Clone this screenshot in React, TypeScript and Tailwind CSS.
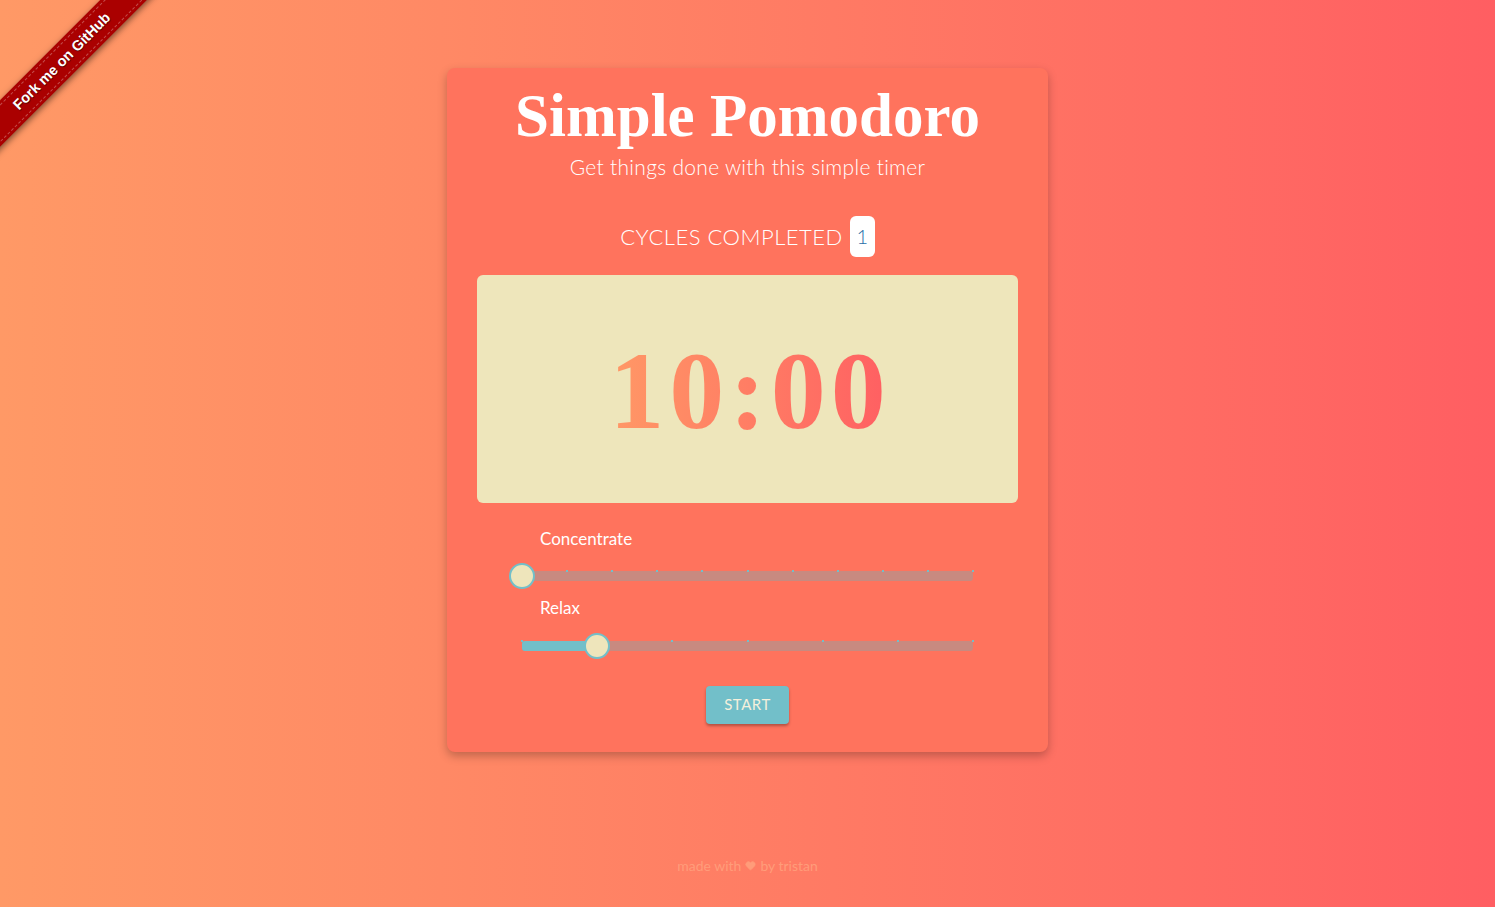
import { Heart } from 'lucide-react';

const Slider = ({ steps, value }: { steps: number; value: number }) => {
  const pct = (value / steps) * 100;
  return (
    <div className="relative mx-[75px] h-[30px]">
      <div className="absolute left-0 right-0 top-[10px] h-[10px] rounded-[3px] bg-[#c88a80]" />
      <div
        className="absolute left-0 top-[10px] h-[10px] rounded-l-[3px] bg-[#72bfc9]"
        style={{ width: `${pct}%` }}
      />
      {Array.from({ length: steps + 1 }).map((_, i) => (
        <div
          key={i}
          className="absolute top-[9px] h-[2px] w-[2px] bg-[#72bfc9]"
          style={{ left: `calc(${(i / steps) * 100}% - 1px)` }}
        />
      ))}
      <div
        className="absolute top-[2px] h-[26px] w-[26px] -translate-x-1/2 rounded-full border-2 border-[#72bfc9] bg-[#eee5bb]"
        style={{ left: `${pct}%` }}
      />
    </div>
  );
};

export default function App() {
  return (
    <div className="relative h-[907px] w-full overflow-hidden bg-gradient-to-r from-[#ff9966] to-[#ff5e62] font-['Lato',sans-serif]">
      {/* ribbon */}
      <div className="absolute left-[-63px] top-[45px] flex h-[33px] w-[250px] -rotate-45 items-center justify-center bg-[#aa0000] shadow-[0_2px_6px_rgba(0,0,0,0.5)]">
        <div className="flex h-[27px] w-full items-center justify-center border-y border-dashed border-white/30 font-['Liberation_Sans',sans-serif] text-[14.5px] font-bold text-white [text-shadow:0_1px_1px_rgba(0,0,0,0.6)]">
          Fork me on GitHub
        </div>
      </div>

      <div className="mx-auto mt-[68px] flex w-[601px] flex-col items-center rounded-lg bg-[#ff735d] px-[30px] pb-[28px] shadow-[0_4px_10px_rgba(0,0,0,0.25)]">
        <h1 className="mt-[14px] font-['Liberation_Serif',serif] text-[61px] font-bold leading-[68px] text-white">
          Simple Pomodoro
        </h1>
        <p className="mt-[1px] text-[21px] font-light tracking-[0.3px] text-white">
          Get things done with this simple timer
        </p>
        <div className="mt-[33px] flex items-center gap-[7px]">
          <span className="text-[22px] font-light uppercase tracking-[0.5px] text-white">Cycles completed</span>
          <span className="flex h-[41px] w-[25px] items-center justify-center rounded-md bg-white text-[20px] font-light text-[#2a6fa8]">
            1
          </span>
        </div>
        <div className="mt-[18px] flex h-[228px] w-full items-center justify-center rounded-md bg-[#eee6bb]">
          <span className="bg-gradient-to-r from-[#ff9966] to-[#ff5e62] bg-clip-text pl-[5px] pt-[4px] font-['Liberation_Serif',serif] text-[110px] font-bold leading-none tracking-[5px] text-transparent">
            10:00
          </span>
        </div>
        <div className="mt-[23px] w-[601px]">
          <div className="ml-[93px] text-[17px] text-white">Concentrate</div>
          <div className="mt-[10px]">
            <Slider steps={10} value={0} />
          </div>
          <div className="ml-[93px] mt-[4px] text-[17px] text-white">Relax</div>
          <div className="mt-[10px]">
            <Slider steps={6} value={1} />
          </div>
        </div>
        <button className="mt-[25px] h-[38px] w-[83px] rounded bg-[#72bfc9] text-[15px] tracking-[0.5px] text-[#f5f0dc] shadow-[0_2px_3px_rgba(0,0,0,0.3)]">
          START
        </button>
      </div>

      <div className="mt-[103px] flex items-center justify-center gap-[4px] text-[14px] text-[#ff9c7a]">
        made with <Heart className="h-[11px] w-[11px] fill-current" /> by tristan
      </div>
    </div>
  );
}
